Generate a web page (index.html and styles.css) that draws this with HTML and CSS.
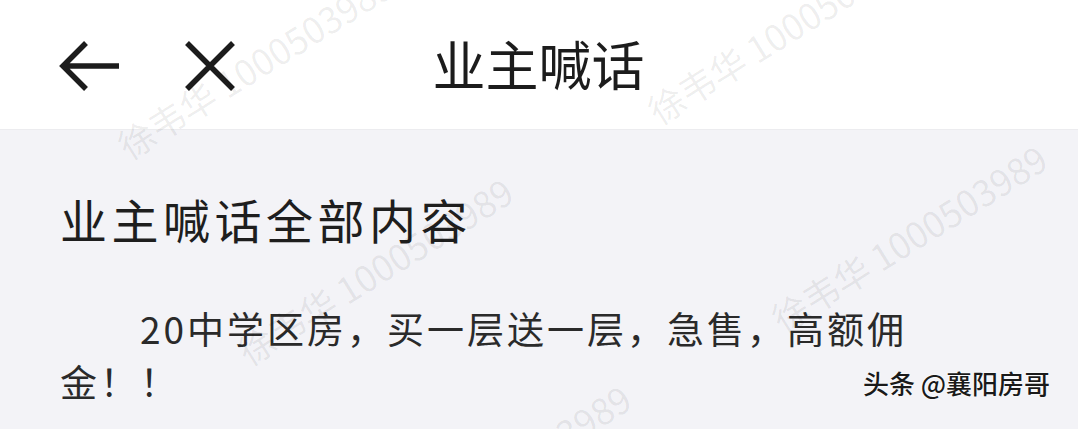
FILE: index.html
```html
<!DOCTYPE html>
<html lang="zh-CN">
<head>
<meta charset="utf-8">
<title>业主喊话</title>
<link rel="stylesheet" href="styles.css">
</head>
<body>
<div class="page">
  <header class="topbar">
    <div class="nav">
      <svg class="icon-back" width="62" height="50" viewBox="0 0 62 50" aria-label="返回">
        <path d="M4 25 H60 M27 2 L4 25 L27 48" fill="none" stroke="#1c1c1c" stroke-width="5.5" stroke-linecap="butt" stroke-linejoin="miter"/>
      </svg>
      <svg class="icon-close" width="52" height="50" viewBox="0 0 52 50" aria-label="关闭">
        <path d="M3 2 L49 48 M49 2 L3 48" fill="none" stroke="#1c1c1c" stroke-width="5.5"/>
      </svg>
    </div>
    <h1 class="title">业主喊话</h1>
    <div class="spacer"></div>
  </header>
  <main class="content">
    <h2 class="heading">业主喊话全部内容</h2>
    <p class="body-text">20中学区房，买一层送一层，急售，高额佣金！！</p>
  </main>
  <div class="watermarks" aria-hidden="true">
    <span class="wm" style="left:130px;top:127px">徐韦华 1000503989</span>
    <span class="wm" style="left:660px;top:92px">徐韦华 1000503989</span>
    <span class="wm" style="left:250px;top:333px">徐韦华 1000503989</span>
    <span class="wm" style="left:784px;top:300px">徐韦华 1000503989</span>
    <span class="wm" style="left:368px;top:540px">徐韦华 1000503989</span>
  </div>
  <div class="credit">头条 @襄阳房哥</div>
</div>
</body>
</html>
```

FILE: styles.css
```css
html, body {
  margin: 0;
  padding: 0;
}
body {
  background: #f3f3f7;
  font-family: "Noto Sans CJK SC", "Noto Sans", sans-serif;
  color: #222;
}
.page {
  position: relative;
  width: 1078px;
  height: 429px;
  overflow: hidden;
}
.topbar {
  height: 130px;
  box-sizing: border-box;
  background: #fff;
  border-bottom: 1px solid #ececef;
  display: grid;
  grid-template-columns: 1fr auto 1fr;
  align-items: center;
  padding: 0 60px 0 59px;
}
.nav {
  display: flex;
  align-items: center;
  gap: 63px;
  padding-top: 2px;
}
.icon-back, .icon-close {
  display: block;
}
.title {
  margin: 0;
  font-size: 53px;
  font-weight: 400;
  line-height: 1;
  color: #1c1c1c;
  padding-bottom: 2px;
}
.content {
  padding: 54px 60px 0;
}
.heading {
  margin: 0;
  font-size: 47px;
  font-weight: 400;
  letter-spacing: 4.5px;
  line-height: 70px;
  color: #1e1e1e;
}
.body-text {
  margin: 48px 0 0;
  font-size: 37px;
  letter-spacing: 3px;
  line-height: 53px;
  text-indent: 80px;
  color: #2a2a2a;
}
.watermarks {
  position: absolute;
  inset: 0;
  pointer-events: none;
}
.wm {
  position: absolute;
  font-size: 36px;
  line-height: 36px;
  white-space: nowrap;
  color: rgba(0, 0, 0, 0.07);
  transform-origin: 0 100%;
  transform: rotate(-32deg);
}
.credit {
  position: absolute;
  right: 28px;
  top: 366px;
  font-size: 26px;
  font-weight: 500;
  line-height: 34px;
  color: #1a1a1a;
  text-shadow: 0 0 2px #fff, 0 0 2px #fff;
}
```
